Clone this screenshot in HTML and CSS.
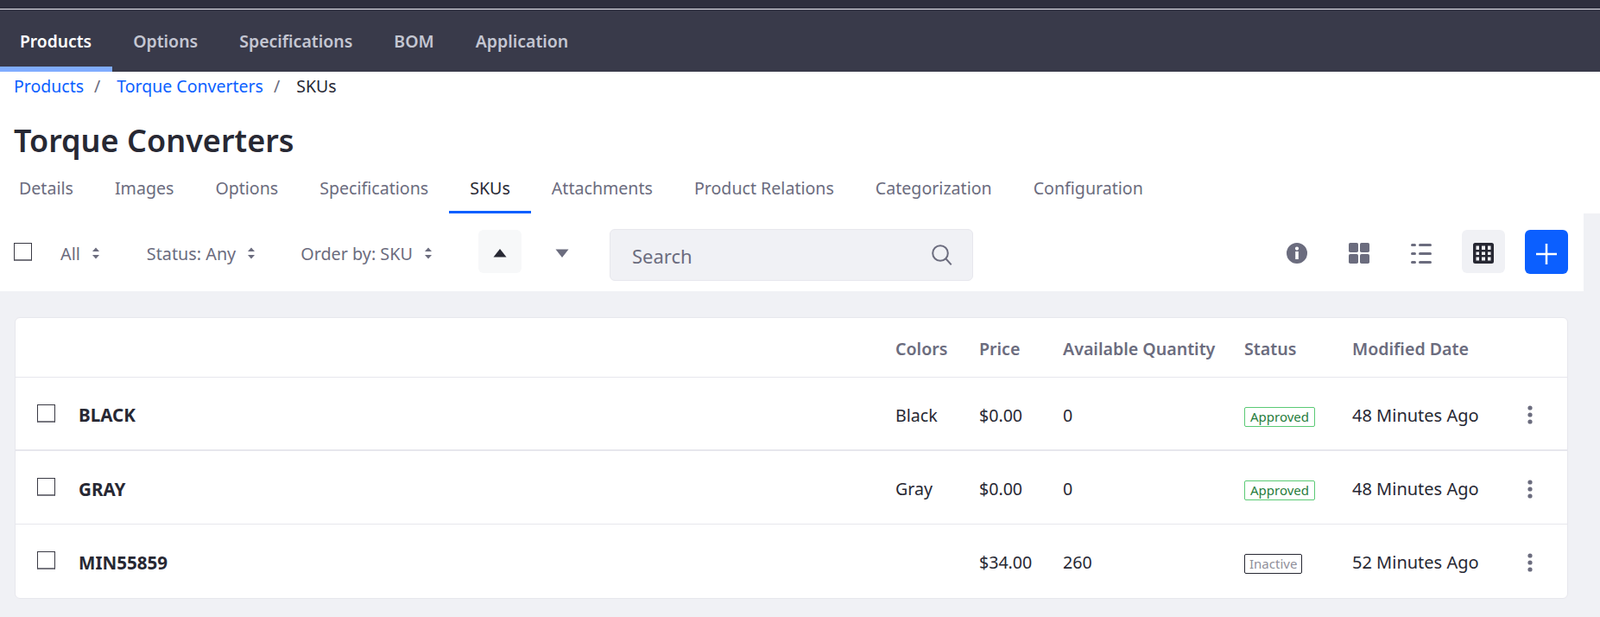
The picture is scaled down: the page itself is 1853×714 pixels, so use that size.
FILE: index.html
```html
<!DOCTYPE html>
<html lang="en">
<head>
<meta charset="utf-8">
<title>SKUs</title>
<link rel="stylesheet" href="styles.css">
</head>
<body>
<div class="strip"></div>
<nav class="nav">
  <a class="nav-item active">Products</a>
  <a class="nav-item">Options</a>
  <a class="nav-item">Specifications</a>
  <a class="nav-item">BOM</a>
  <a class="nav-item">Application</a>
</nav>
<header class="head">
  <div class="crumbs">
    <a class="crumb-link">Products</a><span class="sep">/</span>
    <a class="crumb-link">Torque Converters</a><span class="sep">/</span>
    <span class="crumb-current">SKUs</span>
  </div>
  <h1 class="title">Torque Converters</h1>
  <div class="tabs">
    <a class="tab">Details</a>
    <a class="tab">Images</a>
    <a class="tab">Options</a>
    <a class="tab">Specifications</a>
    <a class="tab current">SKUs</a>
    <a class="tab">Attachments</a>
    <a class="tab">Product Relations</a>
    <a class="tab">Categorization</a>
    <a class="tab">Configuration</a>
  </div>
</header>
<section class="toolbar">
  <span class="check toolbar-check"></span>
  <span class="filter filter-all">All<svg class="updown" viewBox="0 0 10 16"><path d="M5 1.500 9 6H1zM5 14.500 1 10h8z"/></svg></span>
  <span class="filter filter-status">Status: Any<svg class="updown" viewBox="0 0 10 16"><path d="M5 1.500 9 6H1zM5 14.500 1 10h8z"/></svg></span>
  <span class="filter filter-order">Order by: SKU<svg class="updown" viewBox="0 0 10 16"><path d="M5 1.500 9 6H1zM5 14.500 1 10h8z"/></svg></span>
  <button class="tool sort-up"><svg class="tri" viewBox="0 0 16 12"><path d="M8 1 15.500 10.500H.5z"/></svg></button>
  <button class="tool sort-down"><svg class="tri" viewBox="0 0 16 12"><path d="M8 11 .5 1.500H15.500z"/></svg></button>
  <div class="search">
    <span class="search-text">Search</span>
    <svg class="search-icon" viewBox="0 0 24 24"><circle cx="10" cy="10" r="8.800"/><path d="m16.500 16.500 6.200 6.800"/></svg>
  </div>
  <div class="tools-right">
    <button class="tool"><svg class="ico" viewBox="0 0 24 24"><path fill-rule="evenodd" d="M12 0a12 12 0 1 1 0 24 12 12 0 0 1 0-24zM10.200 10v9h3.600v-9zM12 4.500a2.100 2.100 0 1 0 0 4.200 2.100 2.100 0 0 0 0-4.200z"/></svg></button>
    <button class="tool"><svg class="ico" viewBox="0 0 24 24"><rect width="11" height="11" rx="1.800"/><rect x="13" width="11" height="11" rx="1.800"/><rect y="13" width="11" height="11" rx="1.800"/><rect x="13" y="13" width="11" height="11" rx="1.800"/></svg></button>
    <button class="tool"><svg class="ico" viewBox="0 0 24 24"><rect y="1" width="6" height="3" rx="1.500"/><rect x="9" y="1" width="15" height="3" rx="1.500"/><rect y="11" width="6" height="3" rx="1.500"/><rect x="9" y="11" width="15" height="3" rx="1.500"/><rect y="21" width="6" height="3" rx="1.500"/><rect x="9" y="21" width="15" height="3" rx="1.500"/></svg></button>
    <button class="tool selected"><svg class="ico" viewBox="0 0 24 24"><path fill-rule="evenodd" d="M2.500 0h19A2.500 2.500 0 0 1 24 2.500v19a2.500 2.500 0 0 1-2.500 2.500h-19A2.500 2.500 0 0 1 0 21.500v-19A2.500 2.500 0 0 1 2.500 0zM3.500 3.500V8H7V3.500zM10 3.500V8h4V3.500zM17 3.500V8h3.500V3.500zM3.500 10.500v3.500H7v-3.500zM10 10.500v3.500h4v-3.500zM17 10.500v3.500h3.500v-3.500zM3.500 16.500v4H7v-4zM10 16.500v4h4v-4zM17 16.500v4h3.500v-4z"/></svg></button>
    <button class="add"><svg class="plus" viewBox="0 0 24 24"><path d="M0 12h24M12 0v24"/></svg></button>
  </div>
</section>
<main class="content">
  <div class="card">
    <table class="grid">
      <colgroup>
        <col class="c-check"><col class="c-name"><col class="c-colors"><col class="c-price"><col class="c-qty"><col class="c-status"><col class="c-date"><col>
      </colgroup>
      <thead>
        <tr>
          <th></th><th></th><th>Colors</th><th>Price</th><th>Available Quantity</th><th>Status</th><th>Modified Date</th><th></th>
        </tr>
      </thead>
      <tbody>
        <tr class="row-thick">
          <td><span class="check"></span></td><td class="sku">BLACK</td><td>Black</td><td>$0.00</td><td>0</td>
          <td><span class="badge approved">Approved</span></td><td class="date">48 Minutes Ago</td>
          <td><svg class="kebab" viewBox="0 0 6 22"><circle cx="3" cy="3" r="2.600"/><circle cx="3" cy="11" r="2.600"/><circle cx="3" cy="19" r="2.600"/></svg></td>
        </tr>
        <tr>
          <td><span class="check"></span></td><td class="sku">GRAY</td><td>Gray</td><td>$0.00</td><td>0</td>
          <td><span class="badge approved">Approved</span></td><td class="date">48 Minutes Ago</td>
          <td><svg class="kebab" viewBox="0 0 6 22"><circle cx="3" cy="3" r="2.600"/><circle cx="3" cy="11" r="2.600"/><circle cx="3" cy="19" r="2.600"/></svg></td>
        </tr>
        <tr>
          <td><span class="check"></span></td><td class="sku">MIN55859</td><td></td><td>$34.00</td><td>260</td>
          <td><span class="badge inactive">Inactive</span></td><td class="date">52 Minutes Ago</td>
          <td><svg class="kebab" viewBox="0 0 6 22"><circle cx="3" cy="3" r="2.600"/><circle cx="3" cy="11" r="2.600"/><circle cx="3" cy="19" r="2.600"/></svg></td>
        </tr>
      </tbody>
    </table>
  </div>
</main>
</body>
</html>
```
FILE: styles.css
```css
* { box-sizing: border-box; }
html, body { margin: 0; padding: 0; }
body {
  height: 714px;
  overflow: hidden;
  background: #f0f1f5;
  color: #272833;
  font-family: "Noto Sans", "Open Sans", sans-serif;
  font-size: 19.600px;
}
.strip { height: 11px; background: #2e2f3d; border-bottom: 1px solid #e9e9ee; }
.nav { display: flex; height: 72px; background: #393a4a; }
.nav-item {
  padding: 0 24px;
  height: 72px;
  line-height: 74px;
  font-size: 19.500px;
  font-weight: 600;
  color: #c4c6d2;
}
.nav-item.active { padding: 0 24px 0 23px; font-size: 19.300px; color: #fff; border-bottom: 6px solid #80acff; }
.head { background: #fff; }
.crumbs { display: flex; height: 32px; align-items: center; padding-left: 16px; font-size: 19.500px; }
.crumb-link { color: #0b5fff; }
.sep { color: #6b6c7e; margin: 0 19px 0 12px; }
.title { margin: 25px 0 11px 16px; font-size: 36px; line-height: 46px; font-weight: 600; }
.tabs { display: flex; height: 50px; }
.tab {
  padding: 0 24px 5px;
  line-height: 42px;
  height: 50px;
  color: #6b6c7e;
  border-bottom: 3px solid transparent;
}
.tab:first-child { padding-left: 22px; }
.tab.current { color: #272833; border-bottom-color: #0b5fff; }
.toolbar {
  display: flex;
  align-items: flex-start;
  width: 1834px;
  height: 90px;
  padding: 19px 0 0 16px;
  background: #fff;
}
.check {
  display: block;
  width: 21px;
  height: 21px;
  background: #fff;
  border: 1px solid #3a3a44;
  border-bottom: 2px solid #77777f;
}
.toolbar-check { margin-top: 15px; }
.filter { display: flex; align-items: center; height: 54px; color: #6b6c7e; font-size: 19.800px; }
.filter-all { margin-left: 33px; }
.filter-status { margin-left: 54px; }
.filter-order { margin-left: 52px; }
.updown { width: 10px; height: 16px; margin-left: 13px; fill: #6b6c7e; }
.tool {
  display: flex;
  align-items: center;
  justify-content: center;
  width: 50px;
  height: 50px;
  padding: 0;
  border: 0;
  border-radius: 6px;
  background: transparent;
}
.sort-up { margin-left: 53px; background: #f7f8f9; fill: #272833; }
.sort-down { margin-left: 22px; fill: #6b6c7e; }
.tri { width: 16px; height: 12px; margin-top: 4px; }
.search {
  display: flex;
  align-items: center;
  justify-content: space-between;
  width: 421px;
  height: 60px;
  margin: -1px 0 0 30px;
  padding: 0 23px 0 25px;
  background: #f0f1f5;
  border: 1px solid #e7e7ed;
  border-radius: 6px;
  color: #6b6c7e;
  font-size: 22px;
}
.search-text { padding-top: 1px; }
.search-icon { width: 24px; height: 24px; fill: none; stroke: #6b6c7e; stroke-width: 2; }
.tools-right { display: flex; margin-left: auto; margin-right: 18px; gap: 22px; fill: #6b6c7e; }
.ico { width: 24px; height: 24px; margin-top: 4px; }
.tool.selected { background: #f0f1f5; fill: #272833; }
.add {
  display: flex;
  align-items: center;
  justify-content: center;
  width: 50px;
  height: 51px;
  margin-left: 1px;
  padding: 0;
  border: 0;
  border-radius: 6px;
  background: #0b5fff;
}
.plus { width: 24px; height: 24px; margin-top: 5px; stroke: #fff; stroke-width: 2.500; fill: none; }
.content { padding: 30px 37px 0 17px; }
.card {
  height: 326px;
  background: #fff;
  border: 1px solid #e7e7ed;
  border-radius: 6px;
  overflow: hidden;
}
.grid { width: 100%; border-collapse: collapse; table-layout: fixed; }
.c-check { width: 73px; }
.c-name { width: 946px; }
.c-colors { width: 97px; }
.c-price { width: 97px; }
.c-qty { width: 210px; }
.c-status { width: 125px; }
.c-date { width: 190px; }
th {
  height: 68px;
  padding: 3px 0 0;
  text-align: left;
  font-weight: 600;
  color: #6b6c7e;
  border-bottom: 1px solid #e7e7ed;
}
td { height: 85px; padding: 4px 0 0; border-bottom: 1px solid #e7e7ed; }
tbody tr:last-child td { border-bottom: 0; }
.row-thick td { border-bottom: 2px solid #e7e7ed; }
td .check { margin: -4px 0 0 25px; }
td.sku { font-size: 20.600px; font-weight: 700; }
td.date { font-size: 20px; }
.badge {
  display: inline-block;
  height: 23px;
  padding: 0 6px;
  font-size: 15px;
  line-height: 21px;
  border: 1px solid;
  border-radius: 2px;
  vertical-align: 0;
}
.approved { color: #287d3c; border-color: #5aca75; }
.inactive { padding: 0 5px; color: #8f8f9a; border-color: #272833; }
.kebab { display: block; width: 6px; height: 22px; margin-left: 13px; fill: #6b6c7e; }
```
